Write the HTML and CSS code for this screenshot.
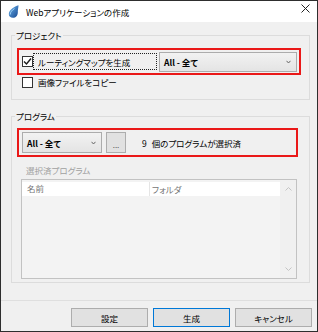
FILE: index.html
```html
<!DOCTYPE html>
<html lang="ja">
<head>
  <meta charset="UTF-8">
  <title>Webアプリケーションの作成</title>
  <link rel="stylesheet" href="styles.css">
</head>
<body>

  <div class="window">
    <div class="titlebar">
      <svg class="app-icon" width="11" height="13" viewBox="0 0 11 13">
        <defs>
          <linearGradient id="drop" x1="0" y1="0" x2="1" y2="1">
            <stop offset="0" stop-color="#6ab4ec"/>
            <stop offset="1" stop-color="#16458f"/>
          </linearGradient>
        </defs>
        <path d="M10.5 0.3 C6.5 1.8 0.8 4.6 0.8 9 C0.8 11.5 2.6 12.8 4.8 12.8 C8 12.8 9.8 10.4 9.8 7.4 C9.8 4.8 10.5 2.4 10.5 0.3 Z" fill="url(#drop)"/>
        <path d="M2.2 9.6 C2.2 7 4.2 5 6.5 3.6" stroke="#9fd2f7" stroke-width="1" fill="none"/>
      </svg>
      <span class="title">Webアプリケーションの作成</span>
      <svg class="close" width="9" height="9" viewBox="0 0 9 9">
        <path d="M0.5 0.5 L8.5 8.5 M8.5 0.5 L0.5 8.5" stroke="#222" stroke-width="1"/>
      </svg>
    </div>

    <div class="client">
      <fieldset class="group group-project">
        <legend>プロジェクト</legend>
        <div class="highlight hl-project">
          <span class="check">
            <svg width="9" height="9" viewBox="0 0 9 9"><path d="M1 4.5 L3.5 7 L8 1.5" stroke="#1a1a1a" stroke-width="1.4" fill="none"/></svg>
          </span>
          <span class="focus-label">ルーティングマップを生成</span>
          <div class="combo combo-wide">
            <span>All - 全て</span>
            <svg class="chev" width="5" height="4" viewBox="0 0 5 4"><path d="M0.5 0.8 L2.5 3 L4.5 0.8" stroke="#666" stroke-width="1" fill="none"/></svg>
          </div>
        </div>
        <div class="check-row">
          <span class="check"></span>
          <span class="check-text">画像ファイルをコピー</span>
        </div>
      </fieldset>

      <fieldset class="group group-program">
        <legend>プログラム</legend>
        <div class="highlight hl-program">
          <div class="combo combo-small">
            <span>All - 全て</span>
            <svg class="chev" width="5" height="4" viewBox="0 0 5 4"><path d="M0.5 0.8 L2.5 3 L4.5 0.8" stroke="#666" stroke-width="1" fill="none"/></svg>
          </div>
          <button class="btn-dots">...</button>
          <span class="count"><span class="num">9</span>個のプログラムが選択済</span>
        </div>
        <div class="sub-label">選択済プログラム</div>
        <div class="list">
          <div class="list-main">
            <div class="list-header">
              <span class="col-name">名前</span>
              <span class="col-folder">フォルダ</span>
            </div>
          </div>
          <div class="scrollbar">
            <svg width="7" height="4" viewBox="0 0 7 4"><path d="M0.5 3.5 L3.5 0.5 L6.5 3.5" stroke="#c4c4c4" stroke-width="1" fill="none"/></svg>
            <svg width="7" height="4" viewBox="0 0 7 4"><path d="M0.5 0.5 L3.5 3.5 L6.5 0.5" stroke="#c4c4c4" stroke-width="1" fill="none"/></svg>
          </div>
        </div>
      </fieldset>

      <div class="footer">
        <button class="btn">設定</button>
        <button class="btn btn-default">生成</button>
        <button class="btn">キャンセル</button>
      </div>
    </div>
  </div>

</body>
</html>
```

FILE: styles.css
```css
body {
  margin: 0;
  background-color: #ffffff;
}
.window {
  width: 318px;
  height: 332px;
  box-sizing: border-box;
  border: 1px solid #2e2e2e;
  background-color: #f0f0f0;
  display: flex;
  flex-direction: column;
  font-family: "Noto Sans CJK JP", sans-serif;
  font-size: 8.5px;
  line-height: 12px;
  font-feature-settings: "palt";
  color: #000;
}
.titlebar {
  height: 21px;
  background-color: #ffffff;
  display: flex;
  align-items: center;
  padding: 0 7px;
}
.app-icon {
  display: block;
}
.title {
  margin-left: 7px;
  flex: 1;
}
.close {
  align-self: flex-start;
  margin-top: 3px;
}
.client {
  flex: 1;
  display: flex;
  flex-direction: column;
}
.group {
  margin: 7px 0 0 10px;
  width: 299px;
  min-width: 0;
  box-sizing: border-box;
  border: 1px solid #dcdcdc;
  padding: 7px 5px 11px;
}
.group legend {
  padding: 0 1px;
  margin-left: -2px;
  line-height: 12px;
}
.group-program {
  margin-top: 10px;
  padding-top: 6px;
  padding-bottom: 3px;
}
.highlight {
  border: 2px solid #ea1818;
  box-sizing: border-box;
  display: flex;
  align-items: center;
  padding-left: 3px;
}
.hl-project {
  width: 284px;
  height: 27px;
}
.hl-program {
  width: 281px;
  height: 29px;
}
.check {
  width: 11px;
  height: 11px;
  box-sizing: border-box;
  border: 1px solid #333;
  background-color: #fff;
  display: flex;
  align-items: center;
  justify-content: center;
  flex-shrink: 0;
}
.focus-label {
  width: 124px;
  height: 17px;
  box-sizing: border-box;
  border: 1px dotted #222;
  padding-left: 4px;
  display: flex;
  align-items: center;
}
.combo {
  height: 20px;
  box-sizing: border-box;
  border: 1px solid #acacac;
  background: linear-gradient(#f2f2f2, #e4e4e4);
  display: flex;
  align-items: center;
  justify-content: space-between;
  padding: 0 5px 0 4px;
  font-weight: bold;
}
.combo-wide {
  width: 138px;
  margin-left: 2px;
}
.combo-small {
  width: 80px;
  height: 21px;
}
.check-row {
  display: flex;
  align-items: center;
  margin-top: 1px;
  margin-left: 5px;
  height: 12px;
}
.check-text {
  margin-left: 5px;
}
.btn-dots {
  width: 20px;
  height: 21px;
  margin-left: 4px;
  border: 1px solid #adadad;
  background-color: #e1e1e1;
  font-family: inherit;
  font-size: 8px;
  color: #555;
  padding: 4px 0 0;
}
.count {
  margin-left: 16px;
}
.num {
  margin-right: 5px;
}
.sub-label {
  margin-top: 7px;
  margin-left: 9px;
  color: #a0a0a0;
}
.list {
  margin-top: 3px;
  margin-left: 4px;
  width: 276px;
  height: 100px;
  box-sizing: border-box;
  border: 1px solid #c2c2c2;
  background-color: #f3f3f3;
  display: flex;
}
.list-main {
  flex: 1;
  padding-top: 2px;
}
.list-header {
  height: 14px;
  background-color: #ffffff;
  display: flex;
  align-items: center;
  color: #767676;
}
.col-name {
  width: 122px;
  padding-left: 5px;
  border-right: 1px solid #e5e5e5;
  height: 14px;
}
.col-folder {
  padding-left: 2px;
}
.scrollbar {
  width: 16px;
  background-color: #f0f0f0;
  display: flex;
  flex-direction: column;
  align-items: center;
  justify-content: space-between;
  padding: 7px 0 7px;
  box-sizing: border-box;
}
.footer {
  margin-top: auto;
  border-top: 1px solid #dfdfdf;
  padding: 7px 5px 4px;
  display: flex;
  justify-content: flex-end;
  gap: 5px;
}
.btn {
  width: 77px;
  height: 19px;
  border: 1px solid #adadad;
  background-color: #e1e1e1;
  font-family: inherit;
  font-size: 8.5px;
  font-feature-settings: "palt";
  padding: 0;
}
.btn-default {
  border-color: #0078d7;
}
```
